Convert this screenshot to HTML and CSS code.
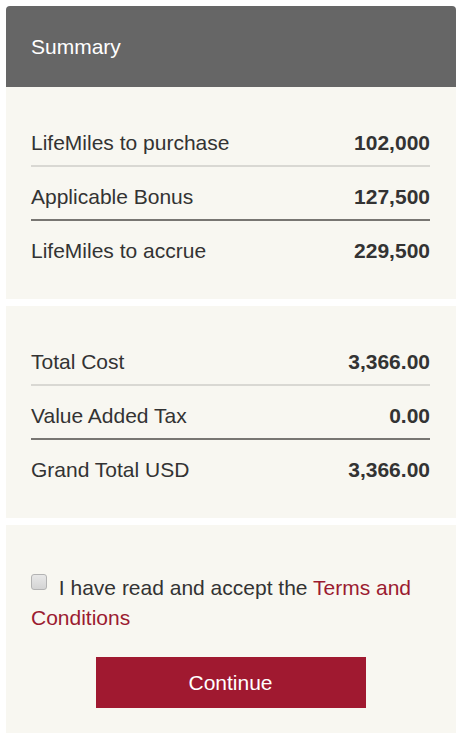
FILE: index.html
```html
<!DOCTYPE html>
<html lang="en">
  <head>
    <meta charset="UTF-8" />
    <meta name="viewport" content="width=device-width, initial-scale=1.0" />
    <title>Summary</title>

    <link rel="stylesheet" href="styles.css">
  </head>

  <body>
    <div class="summary">
      <div class="summary-head">Summary</div>

      <div class="block">
        <div class="row">
          <span>LifeMiles to purchase</span>
          <span class="value">102,000</span>
        </div>
        <div class="row row-sub">
          <span>Applicable Bonus</span>
          <span class="value">127,500</span>
        </div>
        <div class="row row-last">
          <span>LifeMiles to accrue</span>
          <span class="value">229,500</span>
        </div>
      </div>

      <div class="block">
        <div class="row">
          <span>Total Cost</span>
          <span class="value">3,366.00</span>
        </div>
        <div class="row row-sub">
          <span>Value Added Tax</span>
          <span class="value">0.00</span>
        </div>
        <div class="row row-last">
          <span>Grand Total USD</span>
          <span class="value">3,366.00</span>
        </div>
      </div>

      <div class="block block-terms">
        <label class="terms">
          <input type="checkbox" class="check" />
          I have read and accept the <a href="#">Terms and Conditions</a>
        </label>
        <button class="btn-continue">Continue</button>
      </div>
    </div>
  </body>
</html>
```

FILE: styles.css
```css
* {
  margin: 0;
  padding: 0;
  box-sizing: border-box;
  font-family: Arial, "Liberation Sans", sans-serif;
}
body {
  padding: 6px;
  background: #fff;
  color: #333;
}

.summary {
  width: 450px;
}

.summary-head {
  height: 81px;
  padding: 29px 25px 0;
  background: #666;
  border-radius: 4px 4px 0 0;
  color: #fff;
  font-size: 21px;
  line-height: 24px;
}

.block {
  margin-bottom: 7px;
  padding: 26px 26px 25px 25px;
  background: #f8f7f1;
  font-size: 21px;
}
.block:last-child {
  margin-bottom: 0;
}

.row {
  display: flex;
  justify-content: space-between;
  padding: 18px 0 10px;
  border-bottom: 2px solid #d9d8d3;
  line-height: 24px;
}
.row-sub {
  border-bottom-color: #787672;
}
.row-last {
  padding-bottom: 11px;
  border-bottom: none;
}
.value {
  font-weight: bold;
}

.block-terms {
  padding: 48px 26px 25px 25px;
}
.terms {
  display: block;
  line-height: 30px;
}
.terms a {
  color: #9b1b30;
  text-decoration: none;
}
.check {
  appearance: none;
  width: 16px;
  height: 16px;
  margin: 0 6px 0 0;
  vertical-align: 5px;
  border: 1px solid #b3b3b3;
  border-radius: 3px;
  background: linear-gradient(#e8e8e8, #d4d4d4);
}

.btn-continue {
  display: block;
  width: 270px;
  height: 51px;
  margin: 24px auto 0;
  border: none;
  background: #a01930;
  color: #fff;
  font-size: 21px;
  cursor: pointer;
}
```
